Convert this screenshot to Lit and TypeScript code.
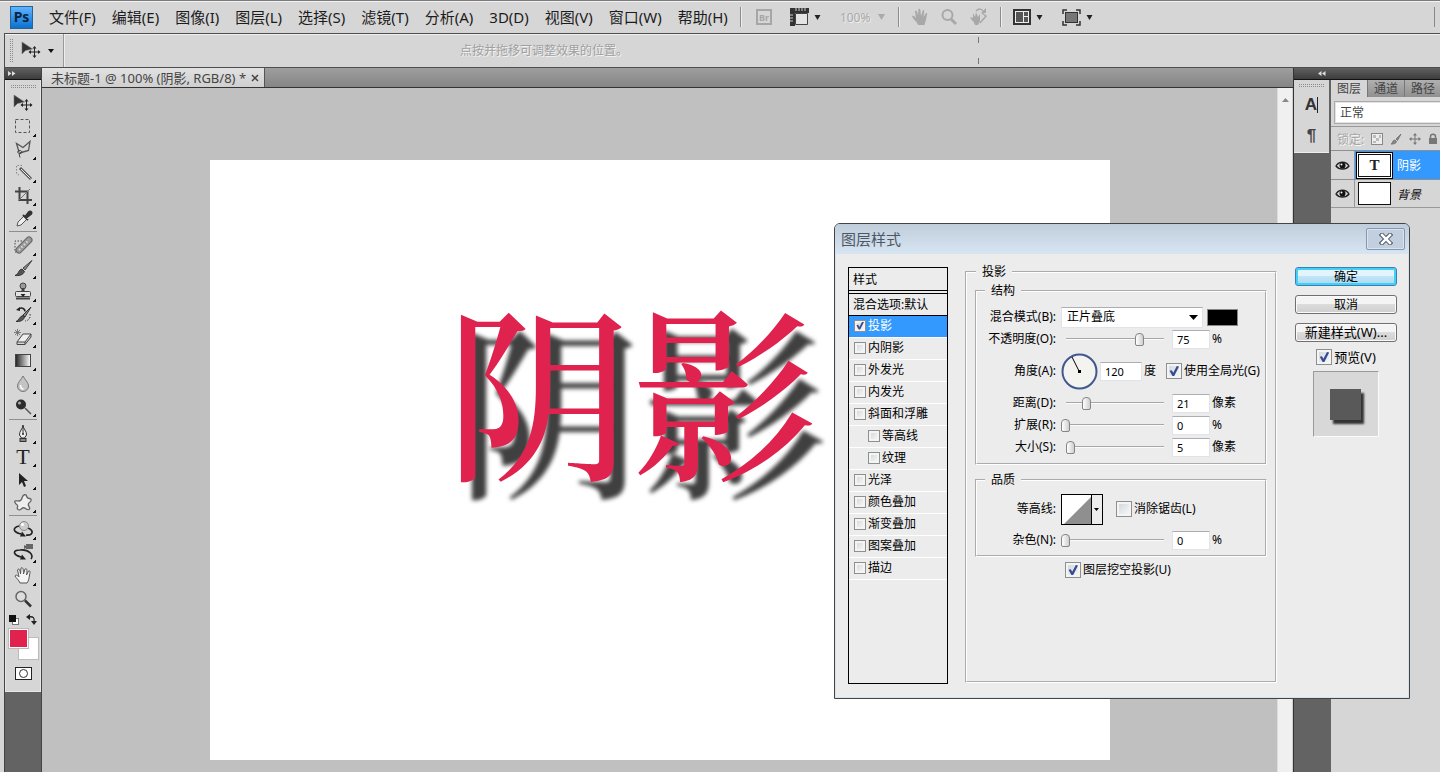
import { LitElement, html, svg, css, nothing } from "lit";
import { customElement } from "lit/decorators.js";
import { classMap } from "lit/directives/class-map.js";

const glyph = (w: number, h: number, body: unknown) =>
  html`<svg class="glyph" width=${w} height=${h} viewBox="0 0 ${w} ${h}" fill="none" aria-hidden="true">${body}</svg>`;

const caret = glyph(7, 5, svg`<path d="M.5 0h6L3.500 5z" fill="#222"/>`);

const moveArt = svg`
  <path d="M1 1v12l3.500-3.500 7-1.500z" fill="#333" stroke="#777" stroke-width=".6"/>
  <path d="M13.500 6v10M8.500 11h10" stroke="#222"/>
  <path d="M13.500 5l2 2.500h-4zM13.500 17l2-2.500h-4zM7.500 11l2.500-2v4zM19.500 11l-2.500-2v4z" fill="#222"/>`;

const toolArt: Record<string, unknown> = {
  move: moveArt,
  marquee: svg`<rect x="2.500" y="2.500" width="14" height="13" stroke="#555" stroke-dasharray="3 2"/>`,
  lasso: svg`<path d="M6 12L3.500 3.500l6.500 4 7-6-1.500 9-9 2.500" stroke="#555" stroke-width="1.300"/><path d="M7 10.500c-3 0-3 3 0 3s2-3 0-3M6 13.500l1 4" stroke="#444"/>`,
  wand: svg`<path d="M9 2.500H3.500v8l3 2" stroke="#888" stroke-dasharray="1.500 1.500"/><path d="M7 5l11 11" stroke="#555" stroke-width="3"/><path d="M8 6l9.500 9.500" stroke="#eee"/>`,
  crop: svg`<path d="M6.500 1v13H19M2 5.500h12.500V18" stroke="#444" stroke-width="2"/><path d="M5 15L17 3" stroke="#777"/>`,
  eyedropper: svg`<path d="M4 17l1-4 6-6 3 3-6 6z" fill="#eee" stroke="#555"/><path d="M10 6l5 5M12 8l4-5c1.500-1.500 3.500.5 2 2l-5 4z" stroke="#333" stroke-width="2" fill="#333"/>`,
  heal: svg`<path d="M9 5H2v11h6" stroke="#444" stroke-dasharray="1.500 1.500"/><path d="M6 14L16 4" stroke="#666" stroke-width="7" stroke-linecap="round"/><path d="M6 14L16 4" stroke="#999" stroke-width="5" stroke-linecap="round"/><path d="M6 14L16 4" stroke="#ddd" stroke-width="2" stroke-dasharray="1.500 2"/>`,
  brush: svg`<path d="M19 1.500L10 9l2 2z" fill="#888" stroke="#444"/><path d="M2 16.500c4-.5 3-6 7-6.500l2.500 2.500C10 16 6 17 2 16.500z" fill="#555" stroke="#333"/>`,
  stamp: svg`<circle cx="10" cy="4" r="3" fill="#999" stroke="#444"/><path d="M10 6v4" stroke="#444" stroke-width="3"/><rect x="2.500" y="9.500" width="15" height="5" rx="1" fill="#e4e4e4" stroke="#444"/><path d="M3 16.500h14" stroke="#444" stroke-width="2"/><path d="M7.500 12h5L10 15z" fill="#222"/>`,
  history: svg`<path d="M18 2l-8 8 2 2z" fill="#888" stroke="#333"/><path d="M3 16.500c3-.5 3-5 7-6l1.500 2c-1 3-5 4.500-8.500 4z" fill="#555" stroke="#333"/><path d="M5 4.500c3-3 7-1 7 2" stroke="#222" stroke-width="1.500"/><path d="M3 5l4-3v4z" fill="#222"/><path d="M17 9c1 4-2 7-5 7" stroke="#333" stroke-dasharray="1.500 1.500"/>`,
  eraser: svg`<path d="M4 14l6-8h8l-6 8z" fill="#eee" stroke="#444"/><path d="M4 14v2.500h8L18 9V6M12 14v2.500" stroke="#444"/><path d="M2 2l5 5M7 2L2 7M4.500 1v7M1 4.500h7" stroke="#666" stroke-width=".8"/>`,
  gradient: svg`<defs><linearGradient id="g"><stop offset="0" stop-color="#222"/><stop offset="1" stop-color="#fff"/></linearGradient></defs><rect x="2.500" y="3.500" width="15" height="12" fill="url(#g)" stroke="#444"/>`,
  blur: svg`<path d="M10 2c2 4 5.500 6.500 5.500 10a5.500 5.500 0 0 1-11 0c0-3.500 3.500-6 5.500-10z" fill="#c4c4c4" stroke="#777"/><path d="M7.500 11c0 3 1 4 3 4" stroke="#fff" stroke-width="1.500"/>`,
  dodge: svg`<path d="M12 11l6 6" stroke="#555" stroke-width="1.500"/><circle cx="8" cy="7.500" r="5" fill="#2c2c2c"/><circle cx="6.500" cy="6" r="1.500" fill="#aaa"/>`,
  pen: svg`<path d="M10 1c0 4 4 6 3.500 10l-2 3h-3l-2-3C6 7 10 5 10 1z" fill="#eee" stroke="#333"/><path d="M10 2v8" stroke="#333"/><circle cx="10" cy="10" r="1" fill="#333"/><rect x="7" y="14.500" width="6" height="3" fill="#888" stroke="#333"/>`,
  type: nothing,
  select: svg`<path d="M6 3v12l3-3 2 5 2-1-2-5h4z" fill="#222"/>`,
  shape: svg`<path d="M9 5c1-4 4-4 4.500-2s1 2.500 3 2.500 2.500 2.500 0 4-1 3 0 5-1.500 3-4 1-3.500 0-5 1-4 0-3-2.500S3 12 2 9.500 4 8 6 8s2.500-1 3-3z" fill="#eee" stroke="#666" stroke-width="1.300"/>`,
  rotate3d: svg`<path d="M6 6C-1 8 0 12 8 14M15 8c7 3 4 8-2 7" stroke="#222" stroke-width="1.600"/><path d="M13 16.500H7l2-5z" fill="#222"/><circle cx="11" cy="6" r="4.500" fill="#ccc" stroke="#888"/><circle cx="9.500" cy="4.500" r="1.500" fill="#fff"/>`,
  orbit3d: svg`<path d="M7 7C-1 7 0 12 8 14M7 7c9-1 14 5 11 9" stroke="#222" stroke-width="1.600"/><path d="M13 16.500H7l2-5z" fill="#222"/><path d="M13 1h7v5h-7zM11 2l2 1v2l-2 1z" fill="#666"/>`,
  hand: svg`<path d="M7 17c-1-3-4-5-5-7 1-2 3 0 4 1L4.500 4c1-2 2.500-1 3 4L8 2c1.500-1 2.500 0 2.500 6l1.500-5c1.500-1 2.500 0 1.500 6l2-4c1.500-.5 2 .5 1 4-.5 4-1 6-2.500 8z" fill="#f4f4f4" stroke="#555"/>`,
  zoom: svg`<circle cx="8" cy="7.500" r="5" fill="#ddd" stroke="#666" stroke-width="1.500"/><path d="M12 11.500l6 6" stroke="#333" stroke-width="2.500"/>`,
};

const toolGroups: [string, string][][] = [
  [["move", "移动"], ["marquee", "矩形选框"], ["lasso", "套索"], ["wand", "快速选择"], ["crop", "裁剪"], ["eyedropper", "吸管"]],
  [["heal", "修复画笔"], ["brush", "画笔"], ["stamp", "仿制图章"], ["history", "历史记录画笔"], ["eraser", "橡皮擦"], ["gradient", "渐变"], ["blur", "模糊"], ["dodge", "减淡"]],
  [["pen", "钢笔"], ["type", "文字"], ["select", "路径选择"], ["shape", "自定形状"]],
  [["rotate3d", "3D 旋转"], ["orbit3d", "3D 环绕"], ["hand", "抓手"], ["zoom", "缩放"]],
];

const baseStyles = css`
  :host { box-sizing: border-box; }
  * { box-sizing: border-box; }
  button, input, select { font: inherit; color: inherit; margin: 0; }
  button { padding: 0; border: 0; background: none; }
  .glyph { display: block; flex: none; }
  .grip { background: conic-gradient(#8c8c8c 25%, transparent 0) 0 0 / 2px 2px; flex: none; }
`;

@customElement("ps-menubar")
class PsMenubar extends LitElement {
  static styles = [baseStyles, css`
    :host { display: block; color: #1c1c1c; }
    .bar { display: flex; align-items: center; height: 33px; padding-left: 10px; border-top: 1px solid #7b7b7b; box-shadow: inset 0 1px #f4f4f4; }
    .logo { width: 23px; height: 23px; margin-right: 16px; border: 1px solid #2a6496; background: linear-gradient(#5db4ff, #0c71cf); color: #0a2440; font-size: 14px; font-weight: 700; line-height: 20px; text-align: center; }
    nav { display: flex; gap: 16px; font-size: 15px; line-height: 20px; white-space: nowrap; }
    .rule { width: 1px; height: 20px; background: #8c8c8c; box-shadow: 1px 0 #ededed; flex: none; }
    .tools { display: flex; align-items: center; margin-left: 12px; flex: 1; }
    .tools button { display: flex; align-items: center; gap: 5px; margin-right: 19px; }
    .tools .faded { color: #aaa; font-size: 12px; gap: 8px; text-shadow: 1px 1px #eee; margin-right: 13px; }
    .tools .br { margin: 0 18px 0 15px; }
    .tools .hands { margin: 0 0 0 13px; }
    .tools .first { margin-left: 12px; }
    .edge { height: 20px; border-left: 1px solid #888; margin-left: auto; width: 6px; }
  `];

  render() {
    const menus = ["文件(F)", "编辑(E)", "图像(I)", "图层(L)", "选择(S)", "滤镜(T)", "分析(A)", "3D(D)", "视图(V)", "窗口(W)", "帮助(H)"];
    return html`<div class="bar">
      <div class="logo">Ps</div>
      <nav>${menus.map((m) => html`<button>${m}</button>`)}</nav>
      <div class="tools">
        <span class="rule"></span>
        <button class="br" aria-label="Bridge"><svg class="glyph" width="16" height="16" viewBox="0 0 16 16"><rect x="1" y="1" width="14" height="14" fill="none" stroke="#a6a6a6" stroke-width="2"/><text x="8" y="12" text-anchor="middle" font-size="9" font-weight="700" fill="#a6a6a6">Br</text></svg></button>
        <button aria-label="查看额外内容">${glyph(19, 18, svg`<path d="M0 0h19v5H5v13H0z" fill="#333"/><path d="M6 0v3M9 0v3M12 0v3M15 0v3M0 7h3M0 10h3M0 13h3" stroke="#ccc"/><path d="M5.500 5.500h12v11h-12z" stroke="#444" fill="#e4e4e4"/>`)}${caret}</button>
        <button class="faded" disabled>100% ${glyph(7, 6, svg`<path d="M0 0h7L3.500 6z" fill="#aaa"/>`)}</button>
        <span class="rule"></span>
        <button class="hands" aria-label="抓手">${glyph(16, 18, svg`<path d="M6 17C5 13 1 12 0 8c2-1 3 1 4 2L3 3c2-1 2.500 1 3 5l.5-7c2-1 2 1 2.500 7l2-6c1.500 0 1.500 1 .5 7l2.500-4c2 0 1 1 .5 4-.5 4-1.500 5-2 8z" fill="#a8a8a8"/>`)}</button>
        <button class="hands" aria-label="缩放">${glyph(16, 18, svg`<circle cx="6.500" cy="7" r="5" stroke="#a8a8a8" stroke-width="2"/><path d="M10 11l5 5" stroke="#a8a8a8" stroke-width="3"/>`)}</button>
        <button class="hands" aria-label="旋转视图">${glyph(18, 18, svg`<path d="M5 17c-1-4-4-5-5-8l3 1V5l2 4 1-5 2 5 2-3v7l-2 4z" fill="#a8a8a8"/><path d="M6 3c3-3 6-2 7 0M10 15l6-7-4-3" stroke="#a8a8a8" stroke-width="1.500"/><path d="M11 5h5V0z" fill="#a8a8a8"/>`)}</button>
        <span class="rule first"></span>
        <button class="first" aria-label="排列文档">${glyph(18, 17, svg`<rect x="1" y="1" width="16" height="14" fill="#eee" stroke="#333" stroke-width="2"/><path d="M3 3h7v10H3zM11 3h4v4h-4zM11 8h4v5h-4z" fill="#555"/>`)}${caret}</button>
        <button aria-label="屏幕模式">${glyph(19, 17, svg`<path d="M1 5V1h4M14 1h4v4M18 12v4h-4M5 16H1v-4" stroke="#333" stroke-width="1.500"/><rect x="3.500" y="3.500" width="12" height="10" fill="#777" stroke="#333"/>`)}${caret}</button>
        <span class="edge"></span>
      </div>
    </div>`;
  }
}

@customElement("ps-optionsbar")
class PsOptionsbar extends LitElement {
  static styles = [baseStyles, css`
    :host { display: block; padding-left: 4px; }
    .bar { display: flex; align-items: center; height: 35px; border: 1px solid #4d4d4d; border-width: 1px 0 1px 1px; box-shadow: inset 0 1px #f2f2f2; }
    .grip { width: 4px; height: 24px; margin: 0 8px 0 4px; }
    .tool { display: flex; align-items: center; gap: 6px; }
    .split { align-self: stretch; margin-left: 9px; border-left: 1px solid #999; box-shadow: 1px 0 #eee; }
    .hint { margin-left: 396px; width: 518px; color: #a0a0a0; font-size: 12px; line-height: 18px; text-shadow: 1px 1px #f4f4f4; }
    .ticks { width: 1px; height: 27px; background: linear-gradient(#777 6px, transparent 6px 21px, #777 21px); }
  `];

  render() {
    return html`<div class="bar">
      <span class="grip"></span>
      <button class="tool" aria-label="移动工具">${glyph(21, 19, moveArt)}${glyph(6, 4, svg`<path d="M0 0h6L3 4z" fill="#111"/>`)}</button>
      <span class="split"></span>
      <span class="hint">点按并拖移可调整效果的位置。</span>
      <span class="ticks"></span>
    </div>`;
  }
}

@customElement("ps-toolbox")
class PsToolbox extends LitElement {
  static styles = [baseStyles, css`
    :host { display: flex; flex-direction: column; width: 38px; margin-left: 4px; flex: none; background: #636363; border: 1px solid #444; border-width: 0 1px; }
    .head { height: 12px; background: linear-gradient(#606060, #3c3c3c); border-bottom: 1px solid #111; padding: 3px; }
    .body { height: 612px; padding-top: 5px; background: #d6d6d6; border: 1px solid #e6e6e6; border-top: 0; display: flex; flex-direction: column; align-items: center; }
    .grip { width: 27px; height: 4px; margin-bottom: 3px; }
    .group { display: flex; flex-direction: column; }
    .group + .group { border-top: 1px solid #8f8f8f; margin-top: 1px; padding-top: 2px; }
    .tool { display: flex; align-items: center; justify-content: center; width: 28px; height: 23px; }
    .more { background: linear-gradient(135deg, transparent 50%, #111 50%) 24px 18px / 3px 4px no-repeat; }
    .type { font: 400 22px/23px "Liberation Serif", serif; color: #222; }
    .mini { display: flex; justify-content: space-between; width: 28px; margin-top: 4px; }
    .colors { display: grid; grid-template-columns: 10px 11px 10px; grid-template-rows: 9px 12px 11px; margin-top: 3px; }
    .colors button { border: 1px solid #bbb; }
    .colors .front { grid-area: 1 / 1 / 3 / 3; z-index: 1; background: #df234e; box-shadow: inset 0 0 0 1px #fff; }
    .colors .back { grid-area: 2 / 2 / 4 / 4; background: #fff; }
    .mask { margin-top: 7px; }
  `];

  render() {
    return html`
      <div class="head">${glyph(8, 5, svg`<path d="M0 0l3.500 2.500L0 5zM4 0l3.500 2.500L4 5z" fill="#ddd"/>`)}</div>
      <div class="body">
        <span class="grip"></span>
        ${toolGroups.map((group) => html`<div class="group">${group.map(([id, label]) => html`
          <button class=${classMap({ tool: true, type: id === "type", more: id !== "move" && id !== "zoom" })} aria-label=${label}>
            ${id === "type" ? "T" : glyph(21, 19, toolArt[id])}
          </button>`)}</div>`)}
        <div class="mini">
          <button aria-label="默认前景色和背景色">${glyph(10, 10, svg`<rect x="3.500" y="3.500" width="6" height="6" fill="#fff" stroke="#777"/><path d="M0 0h7v7H0z" fill="#111"/>`)}</button>
          <button aria-label="切换前景色和背景色">${glyph(11, 11, svg`<path d="M3 3c4-1 6 1 5 5" stroke="#222" stroke-width="1.300"/><path d="M0 3l4-3v6zM8 11L5 7h6z" fill="#222"/>`)}</button>
        </div>
        <div class="colors">
          <button class="front" aria-label="前景色"></button>
          <button class="back" aria-label="背景色"></button>
        </div>
        <button class="mask" aria-label="快速蒙版">${glyph(17, 13, svg`<rect x=".5" y=".5" width="16" height="12" fill="#fff" stroke="#222"/><circle cx="8.500" cy="6.500" r="4" stroke="#333"/>`)}</button>
      </div>`;
  }
}

@customElement("ps-document")
class PsDocument extends LitElement {
  static styles = [baseStyles, css`
    :host { display: flex; flex-direction: column; flex: 1; min-width: 0; }
    .tabs { display: flex; height: 20px; background: linear-gradient(#9e9e9e, #858585); border-bottom: 1px solid #333; flex: none; }
    .tab { display: flex; align-items: center; gap: 5px; padding: 0 5px 0 9px; background: linear-gradient(#e2e2e2, #cfcfcf); border-right: 1px solid #555; color: #444; font-size: 13px; line-height: 18px; white-space: nowrap; }
    .view { display: flex; flex: 1; min-height: 0; background: #c0c0c0; }
    .stage { flex: 1; min-width: 0; overflow: hidden; padding-top: 72px; }
    .sheet { width: 900px; height: 600px; margin: 0 auto; padding: 133px 0 0 236px; background: #fff; }
    .art { margin: 0; color: #df234e; font: 500 186px/188px "Noto Serif CJK SC", "Source Han Serif SC", "Noto Sans CJK SC", serif; text-shadow: 11px 18px 4px #404040; white-space: nowrap; }
    .scroll { width: 16px; background: #f0f0f0; border-left: 1px solid #ddd; border-right: 1px solid #d0d0d0; padding: 10px 0 0 4px; }
  `];

  render() {
    return html`
      <div class="tabs"><div class="tab">未标题-1 @ 100% (阴影, RGB/8) *
        <button aria-label="关闭">${glyph(8, 8, svg`<path d="M1 1l6 6M7 1L1 7" stroke="#444" stroke-width="1.500"/>`)}</button></div></div>
      <div class="view">
        <div class="stage"><div class="sheet"><p class="art">阴影</p></div></div>
        <div class="scroll">${glyph(7, 4, svg`<path d="M0 4h7L3.500 0z" fill="#888"/>`)}</div>
      </div>`;
  }
}

@customElement("ps-panels")
class PsPanels extends LitElement {
  static styles = [baseStyles, css`
    :host { display: flex; flex-direction: column; width: 147px; flex: none; background: #636363; border-left: 1px solid #333; overflow: hidden; font-size: 12px; color: #444; }
    .head { height: 12px; background: linear-gradient(#606060, #3c3c3c); border-bottom: 1px solid #111; padding: 3px 0 0 24px; flex: none; }
    .cols { display: flex; flex: 1; gap: 2px; min-height: 0; }
    .strip { width: 35px; height: 73px; display: flex; flex-direction: column; align-items: center; padding-top: 4px; background: #d6d6d6; border-bottom: 1px solid #eee; flex: none; }
    .grip { width: 27px; height: 4px; margin-bottom: 9px; }
    .char { border-right: 1px solid #222; font: 700 17px/16px "Liberation Sans", sans-serif; color: #333; }
    .para { margin-top: 14px; font: 700 17px/18px "Liberation Sans", sans-serif; color: #444; }
    .panel { flex: 1; background: #d6d6d6; min-width: 0; overflow: hidden; white-space: nowrap; }
    .tabs { display: flex; height: 17px; background: #a0a0a0; }
    .tabs button { padding: 0 6px; line-height: 17px; border-right: 1px solid #777; background: linear-gradient(#b0b0b0, #909090); flex: none; }
    .tabs .on { background: #d6d6d6; }
    .blend { height: 30px; padding: 4px 0 0 3px; border-bottom: 1px solid #999; }
    .blend select { appearance: none; width: 160px; height: 23px; padding: 0 5px; border: 1px solid #aaa; box-shadow: inset 0 0 0 1px #e4e4e4; background: #fff; border-radius: 0; }
    .lock { display: flex; align-items: center; gap: 7px; height: 23px; padding-left: 6px; color: #a6a6a6; text-shadow: 1px 1px #f6f6f6; }
    .layer { display: flex; align-items: center; height: 29px; border-top: 1px solid #8f8f8f; color: #111; }
    .layer:last-child { border-bottom: 1px solid #999; }
    .eye { width: 24px; height: 100%; display: flex; align-items: center; justify-content: center; background: #d6d6d6; border-right: 1px solid #999; }
    .thumb { width: 33px; height: 23px; margin: 0 6px 0 3px; border: 1px solid #111; background: #fff; text-align: center; font: 700 15px/21px "Liberation Serif", serif; }
    .active { background: #3399ff; color: #fff; }
    .active .thumb { color: #222; box-shadow: 0 0 0 1px #fff; outline: 1px solid #000; outline-offset: 1px; }
    .bg { font-style: italic; }
  `];

  render() {
    const eye = glyph(15, 11, svg`<path d="M1 6c3-5 10-5 13 0-3 4-10 4-13 0z" fill="#ddd" stroke="#222" stroke-width="1.300"/><circle cx="7.500" cy="5.500" r="3" fill="#111"/><circle cx="6.500" cy="4.500" r="1" fill="#fff"/>`);
    return html`
      <div class="head">${glyph(8, 5, svg`<path d="M3.500 0L0 2.500 3.500 5zM7.500 0L4 2.500 7.500 5z" fill="#ddd"/>`)}</div>
      <div class="cols">
        <div class="strip">
          <span class="grip"></span>
          <button class="char" aria-label="字符">A</button>
          <button class="para" aria-label="段落">¶</button>
        </div>
        <div class="panel">
          <div class="tabs"><button class="on">图层</button><button>通道</button><button>路径</button></div>
          <div class="blend"><select aria-label="混合模式"><option>正常</option></select></div>
          <div class="lock"><span>锁定:</span>
            ${glyph(12, 12, svg`<rect x=".5" y=".5" width="11" height="11" fill="#eee" stroke="#888"/><path d="M2 2h3v3H2zM5 5h3v3H5zM8 2h2v3H8zM2 8h3v2H2z" fill="#bbb"/>`)}
            ${glyph(12, 12, svg`<path d="M11 1L6 6l1.500 1.500zM1 11c2 0 1-4 4-4l1.500 1.500C6 11 3 11 1 11z" fill="#888" stroke="#777"/>`)}
            ${glyph(12, 12, svg`<path d="M6 1v10M1 6h10" stroke="#777"/><path d="M6 0l2 2.500H4zM6 12l2-2.500H4zM0 6l2.500-2v4zM12 6l-2.500-2v4z" fill="#777"/>`)}
            ${glyph(10, 12, svg`<path d="M2.500 6V3.500c0-3 5-3 5 0V6" stroke="#777" stroke-width="1.500"/><rect x="1" y="5" width="8" height="6" fill="#777"/>`)}
          </div>
          <div class="layer active"><button class="eye" aria-label="可见性">${eye}</button><span class="thumb">T</span>阴影</div>
          <div class="layer"><button class="eye" aria-label="可见性">${eye}</button><span class="thumb"></span><span class="bg">背景</span></div>
        </div>
      </div>`;
  }
}

@customElement("ps-layer-style")
class PsLayerStyle extends LitElement {
  static styles = [baseStyles, css`
    :host { display: block; width: 576px; border: 1px solid #444; border-radius: 6px 6px 0 0; background: #ececec; box-shadow: inset 0 0 0 1px #d5e2f0; color: #000; font-size: 12px; line-height: 16px; overflow: hidden; }
    .title { display: flex; align-items: center; justify-content: space-between; height: 30px; padding: 0 4px 0 6px; background: linear-gradient(#c0cddb, #d7e4f2); color: #4c5866; font-size: 15px; }
    .title h1 { margin: 0; font: inherit; }
    .close { display: flex; align-items: center; justify-content: center; width: 39px; height: 22px; border: 1px solid #8496b0; border-radius: 2px; box-shadow: inset 0 0 0 1px #d9e4f0; background: #c2cfde; }
    .body { display: flex; align-items: flex-start; padding: 8px 13px 14px; }
    .list { width: 100px; height: 417px; margin: 5px 17px 0 0; border: 1px solid #000; flex: none; }
    .list .top { height: 23px; padding: 4px; border-bottom: 1px solid #000; }
    .list .mix { height: 23px; margin-top: 2px; padding: 3px 4px 0; border: 1px solid #000; border-width: 1px 0; white-space: nowrap; }
    .item { display: flex; align-items: center; gap: 2px; height: 22px; padding: 0 0 2px 5px; border-bottom: 1px solid #fff; white-space: nowrap; }
    .item.sub { padding-left: 19px; }
    .item.on { background: #3399ff; color: #fff; }
    input[type="checkbox"] { appearance: none; display: grid; width: 16px; height: 16px; border: 1px solid #8e8f8f; background: linear-gradient(135deg, #cfd3d8, #fbfbfb); box-shadow: inset 0 0 0 2px #f4f4f4; flex: none; }
    input[type="checkbox"]:checked::before { content: ""; margin: 2px; background: #344c93; clip-path: polygon(5% 48%, 28% 42%, 42% 68%, 78% 0, 100% 6%, 52% 100%, 34% 100%); }
    .item input[type="checkbox"] { width: 12px; height: 12px; }
    .item input[type="checkbox"]:checked::before { margin: 1px; }
    fieldset { margin: 0; padding: 0; border: 2px groove #fff; min-width: 0; }
    legend { margin-left: 8px; padding: 0 6px; line-height: 16px; }
    .main { width: 312px; height: 419px; margin-top: 2px; padding: 3px 8px 0; flex: none; }
    .main > legend { margin-left: 1px; }
    .structure { height: 182px; padding-top: 7px; }
    .quality { height: 85px; margin-top: 7px; padding-top: 1px; }
    .row { display: flex; align-items: center; height: 22px; white-space: nowrap; }
    .row.tall { height: 42px; }
    .row.contour { height: 40px; }
    .name { width: 79px; margin-right: 5px; text-align: right; flex: none; }
    .pick { display: grid; width: 142px; margin-right: 4px; }
    .pick select { grid-area: 1 / 1; appearance: none; height: 21px; padding: 0 5px; border: 1px solid #e2e3ea; border-top-color: #abadb3; border-radius: 0; background: #fff; }
    .pick .glyph { grid-area: 1 / 1; justify-self: end; align-self: center; margin-right: 5px; pointer-events: none; }
    .swatch { width: 31px; height: 17px; background: #000; border: 1px solid #888; }
    .num { width: 38px; height: 19px; padding: 0 4px; border: 1px solid #e2e3ea; border-top-color: #abadb3; background: #fff; font-size: 11px; }
    .num.wide { width: 42px; margin: 0 2px; }
    .unit { margin-left: 2px; }
    input[type="range"] { appearance: none; width: 107px; height: 16px; margin: 0 4px 0 0; background: linear-gradient(#a4a8a8 1px, #fbfbfb 1px) center / 98px 2px no-repeat; }
    input[type="range"]::-webkit-slider-thumb { appearance: none; width: 9px; height: 13px; border: 1px solid #858585; border-radius: 4px 4px 2px 2px; background: linear-gradient(90deg, #fff, #cfcfcf); }
    .check { display: flex; align-items: center; gap: 2px; }
    .global { margin-left: 10px; }
    .alias { margin-left: 13px; }
    .knock { margin: 5px 0 0 90px; }
    .curve { border: 1px solid #000; }
    .side { display: flex; flex-direction: column; align-items: center; width: 102px; margin: 5px 0 0 18px; flex: none; font-size: 13px; }
    .btn { width: 102px; height: 19px; margin-bottom: 9px; border: 1px solid #707070; border-radius: 3px; background: linear-gradient(#f4f4f4 45%, #dcdcdc 50%, #cfcfcf); box-shadow: inset 0 0 0 1px #fafafa; font-size: 12px; line-height: 17px; }
    .btn.ok { border-color: #3c7fb1; background: linear-gradient(#e4f4fc 45%, #c2e4f7 50%, #a9d9f2); box-shadow: inset 0 0 0 2px #41d0f8; }
    .btn.new { font-size: 13px; margin-bottom: 7px; }
    .preview { width: 66px; height: 66px; margin-top: 6px; padding: 17px 16px; border: 1px solid #9a9a9a; border-right-color: #fafafa; border-bottom-color: #fafafa; background: #d8d8d8; }
    .chip { width: 31px; height: 31px; background: #595959; box-shadow: 3px 4px 2px #333; }
  `];

  private slider(id: string, label: string, value: number, unit: string) {
    return html`<div class="row"><label class="name" for=${id}>${label}</label>
      <input type="range" id=${id} min="0" max="100" .value=${String(value)}>
      <input class="num" aria-label=${label} .value=${String(value)}><span class="unit">${unit}</span></div>`;
  }

  render() {
    const effects: [string, boolean?][] = [["投影"], ["内阴影"], ["外发光"], ["内发光"], ["斜面和浮雕"], ["等高线", true], ["纹理", true], ["光泽"], ["颜色叠加"], ["渐变叠加"], ["图案叠加"], ["描边"]];
    return html`
      <div class="title"><h1>图层样式</h1>
        <button class="close" aria-label="关闭">${glyph(14, 12, svg`<path d="M3 2l8 8M11 2l-8 8" stroke="#4b5566" stroke-width="4.500" stroke-linecap="square"/><path d="M3 2l8 8M11 2l-8 8" stroke="#fff" stroke-width="2.500" stroke-linecap="square"/>`)}</button></div>
      <div class="body">
        <div class="list">
          <div class="top">样式</div>
          <div class="mix">混合选项:默认</div>
          ${effects.map(([name, sub], i) => html`<label class=${classMap({ item: true, sub: !!sub, on: i === 0 })}><input type="checkbox" ?checked=${i === 0}>${name}</label>`)}
        </div>
        <fieldset class="main"><legend>投影</legend>
          <fieldset class="structure"><legend>结构</legend>
            <div class="row"><label class="name" for="mode">混合模式(B):</label>
              <span class="pick"><select id="mode"><option>正片叠底</option></select>${glyph(9, 5, svg`<path d="M0 0h9L4.500 5z" fill="#000"/>`)}</span>
              <button class="swatch" aria-label="阴影颜色"></button></div>
            ${this.slider("opacity", "不透明度(O):", 75, "%")}
            <div class="row tall"><label class="name" for="angle">角度(A):</label>
              ${glyph(37, 37, svg`<circle cx="18.500" cy="18.500" r="17" fill="#f3f3f0" stroke="#41588f" stroke-width="2"/><path d="M11 4l7 14" stroke="#000"/><path d="M17 17h3v3h-3z" fill="#000"/>`)}
              <input class="num wide" id="angle" .value=${"120"}>度
              <label class="check global"><input type="checkbox" checked>使用全局光(G)</label></div>
            ${this.slider("distance", "距离(D):", 21, "像素")}
            ${this.slider("spread", "扩展(R):", 0, "%")}
            ${this.slider("size", "大小(S):", 5, "像素")}
          </fieldset>
          <fieldset class="quality"><legend>品质</legend>
            <div class="row contour"><span class="name">等高线:</span>
              <button class="curve" aria-label="等高线">${glyph(40, 29, svg`<rect width="29" height="29" fill="#fff"/><path d="M2 29L29 2v27z" fill="#8f8f8f"/><path d="M29.500 0v29" stroke="#000"/><path d="M32 13h5l-2.500 3z" fill="#000"/>`)}</button>
              <label class="check alias"><input type="checkbox">消除锯齿(L)</label></div>
            ${this.slider("noise", "杂色(N):", 0, "%")}
          </fieldset>
          <label class="check knock"><input type="checkbox" checked>图层挖空投影(U)</label>
        </fieldset>
        <div class="side">
          <button class="btn ok">确定</button>
          <button class="btn">取消</button>
          <button class="btn new">新建样式(W)...</button>
          <label class="check"><input type="checkbox" checked>预览(V)</label>
          <div class="preview"><div class="chip"></div></div>
        </div>
      </div>`;
  }
}

@customElement("app-root")
class AppRoot extends LitElement {
  static styles = css`
    :host { display: flex; flex-direction: column; position: relative; height: 100vh; overflow: hidden; background: #d6d6d6; font-family: "Noto Sans", "Noto Sans CJK SC", sans-serif; }
    .workspace { display: flex; flex: 1; min-height: 0; }
    .dialog { position: absolute; top: 223px; right: 30px; }
  `;

  render() {
    return html`
      <ps-menubar></ps-menubar>
      <ps-optionsbar></ps-optionsbar>
      <div class="workspace">
        <ps-toolbox></ps-toolbox>
        <ps-document></ps-document>
        <ps-panels></ps-panels>
      </div>
      <ps-layer-style class="dialog"></ps-layer-style>`;
  }
}
